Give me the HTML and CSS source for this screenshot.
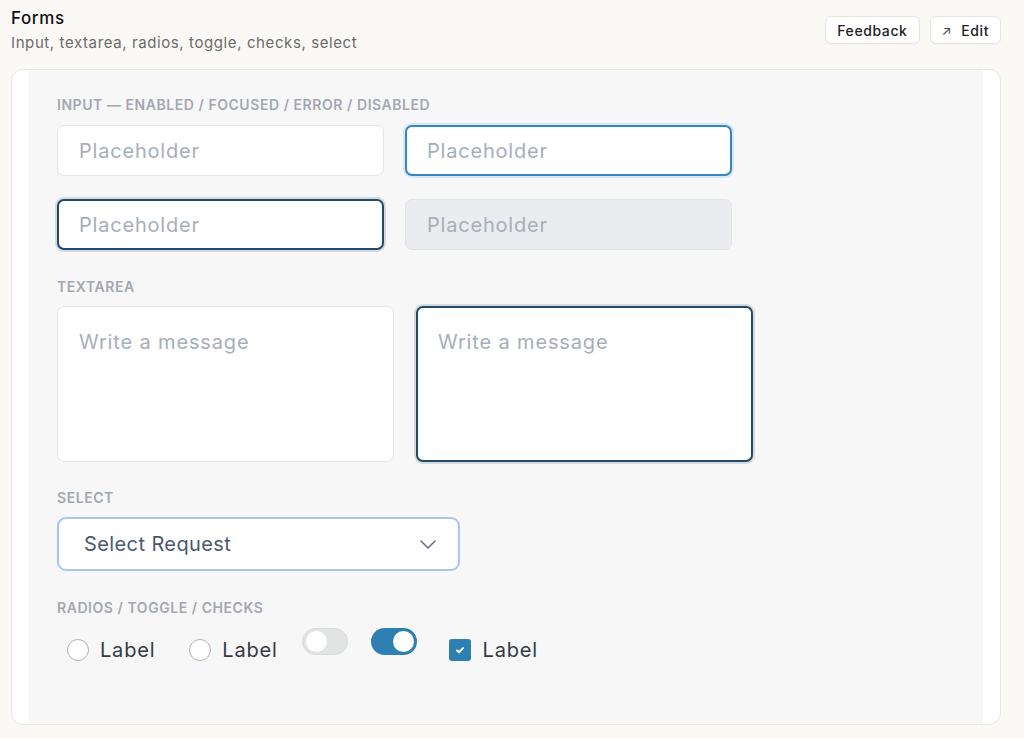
FILE: index.html
```html
<!DOCTYPE html>
<html lang="en">

<head>
    <meta charset="UTF-8">
    <meta name="viewport" content="width=device-width, initial-scale=1.0">
    <link rel="stylesheet" href="styles.css">
</head>

<body>
    <div class="page">
        <div class="header">
            <div class="titles">
                <h1>Forms</h1>
                <p class="subtitle">Input, textarea, radios, toggle, checks, select</p>
            </div>
            <div class="actions">
                <button class="btn">Feedback</button>
                <button class="btn"><span class="arrow">↗</span>Edit</button>
            </div>
        </div>

        <div class="card">
            <div class="preview">
                <div class="label">Input — enabled / focused / error / disabled</div>
                <div class="inputs">
                    <input class="field" type="text" placeholder="Placeholder">
                    <input class="field focused" type="text" placeholder="Placeholder">
                    <input class="field error" type="text" placeholder="Placeholder">
                    <input class="field" type="text" placeholder="Placeholder" disabled>
                </div>

                <div class="label">Textarea</div>
                <div class="areas">
                    <textarea class="area" placeholder="Write a message"></textarea>
                    <textarea class="area error" placeholder="Write a message"></textarea>
                </div>

                <div class="label">Select</div>
                <div class="select">
                    <span>Select Request</span>
                    <svg width="18" height="18" viewBox="0 0 18 18" fill="none">
                        <path d="M2 6l7 7 7-7" stroke="#667085" stroke-width="1.6" stroke-linecap="round" stroke-linejoin="round"/>
                    </svg>
                </div>

                <div class="label">Radios / toggle / checks</div>
                <div class="controls">
                    <label class="radio first"><span class="dot"></span>Label</label>
                    <label class="radio second"><span class="dot"></span>Label</label>
                    <span class="toggle off"><span class="knob"></span></span>
                    <span class="toggle on"><span class="knob"></span></span>
                    <label class="check">
                        <span class="box">
                            <svg width="12" height="12" viewBox="0 0 12 12" fill="none">
                                <path d="M3 6.4l2 1.9 4-4.2" stroke="#fff" stroke-width="2" stroke-linecap="round" stroke-linejoin="round"/>
                            </svg>
                        </span>Label
                    </label>
                </div>
            </div>
        </div>
    </div>
</body>
</html>
```

FILE: styles.css
```css
body {
    margin: 0;
    background-color: #faf9f6;
    font-family: Inter, "Noto Sans", sans-serif;
    color: #1d1d1f;
}
.page {
    padding: 0 23px 0 11px;
}
.header {
    display: flex;
    justify-content: space-between;
    align-items: flex-start;
    height: 69px;
}
h1 {
    font-size: 17px;
    line-height: 20px;
    font-weight: 500;
    letter-spacing: 0.6px;
    margin: 8px 0 0 0;
    color: #111;
}
.subtitle {
    font-size: 15px;
    line-height: 20px;
    letter-spacing: 0.6px;
    margin: 5px 0 0 0;
    color: #6b6b6b;
}
.actions {
    display: flex;
    gap: 10px;
    padding-top: 16px;
}
.btn {
    height: 28px;
    padding: 0 11px;
    background-color: #ffffff;
    border: 1px solid #e6e4df;
    border-radius: 6px;
    font-family: Inter, sans-serif;
    font-size: 14px;
    font-weight: 500;
    letter-spacing: 0.6px;
    color: #222;
    box-shadow: 0 1px 1px rgba(0, 0, 0, 0.03);
}
.arrow {
    font-size: 13px;
    font-weight: 400;
    margin-right: 9px;
    color: #444;
}
.card {
    background-color: #ffffff;
    border: 1px solid #e9e7e2;
    border-radius: 12px;
    padding: 0 17px;
    height: 654px;
}
.preview {
    background-color: #f7f7f7;
    height: 100%;
    padding: 26px 28px 0 28px;
    box-sizing: border-box;
}
.label {
    font-size: 14px;
    line-height: 18px;
    font-weight: 600;
    letter-spacing: 0.55px;
    text-transform: uppercase;
    color: #a3a7b1;
    margin-bottom: 11px;
}
.inputs {
    display: grid;
    grid-template-columns: 327px 327px;
    column-gap: 21px;
    row-gap: 23px;
    margin-bottom: 28px;
}
.field {
    height: 51px;
    box-sizing: border-box;
    border: 1px solid #e3e5e9;
    border-radius: 7px;
    background-color: #ffffff;
    padding: 0 21px;
    font-family: Inter, sans-serif;
    font-size: 20px;
    letter-spacing: 0.8px;
    outline: none;
}
.field::placeholder,
.area::placeholder {
    color: #a7aeb9;
}
.field.focused {
    border: 2px solid #3288c0;
    padding: 0 20px;
    box-shadow: 0 0 0 2px #d7e7f3;
}
.field.error {
    border: 2px solid #1f4b69;
    padding: 0 20px;
    box-shadow: 0 0 0 2px #d3d9df;
}
.field:disabled {
    background-color: #ebecef;
    border-color: #e1e3e7;
}
.areas {
    display: grid;
    grid-template-columns: 337px 337px;
    column-gap: 22px;
    margin-top: -1px;
    margin-bottom: 27px;
}
.area {
    height: 156px;
    box-sizing: border-box;
    border: 1px solid #e3e5e9;
    border-radius: 7px;
    background-color: #ffffff;
    padding: 22px 21px;
    font-family: Inter, sans-serif;
    font-size: 20px;
    line-height: 26px;
    letter-spacing: 0.85px;
    resize: none;
    outline: none;
}
.area.error {
    border: 2px solid #1f4b69;
    padding: 21px 20px;
    box-shadow: 0 0 0 2px #d3d9df;
}
.select {
    width: 403px;
    height: 54px;
    box-sizing: border-box;
    border: 2px solid #a8c3f7;
    border-radius: 9px;
    background-color: #ffffff;
    display: flex;
    align-items: center;
    justify-content: space-between;
    padding: 0 21px 0 25px;
    font-size: 20px;
    letter-spacing: 0.4px;
    color: #4a5870;
    margin-top: -1px;
    margin-bottom: 28px;
}
.controls {
    display: flex;
    align-items: flex-start;
    padding-left: 10px;
    margin-top: 1px;
}
.radio,
.check {
    display: flex;
    align-items: center;
    font-size: 20px;
    line-height: 24px;
    letter-spacing: 0.8px;
    color: #333a44;
    margin-top: 10px;
}
.dot {
    width: 22px;
    height: 22px;
    box-sizing: border-box;
    border: 1.5px solid #aab3c0;
    border-radius: 50%;
    background-color: #ffffff;
    margin-right: 11px;
}
.radio.second {
    margin-left: 34px;
}
.toggle {
    width: 46px;
    height: 27px;
    box-sizing: border-box;
    border-radius: 14px;
    display: flex;
    align-items: center;
    padding: 0 3px;
}
.toggle.off {
    background-color: #e2e3e3;
    border: 1px solid #d8d9d9;
    margin-left: 24px;
}
.toggle.on {
    background-color: #2e80b2;
    justify-content: flex-end;
    margin-left: 23px;
}
.knob {
    width: 21px;
    height: 21px;
    border-radius: 50%;
    background-color: #ffffff;
}
.check {
    margin-left: 32px;
}
.box {
    width: 22px;
    height: 22px;
    border-radius: 3px;
    background-color: #2e80b2;
    display: flex;
    align-items: center;
    justify-content: center;
    margin-right: 12px;
}
```
